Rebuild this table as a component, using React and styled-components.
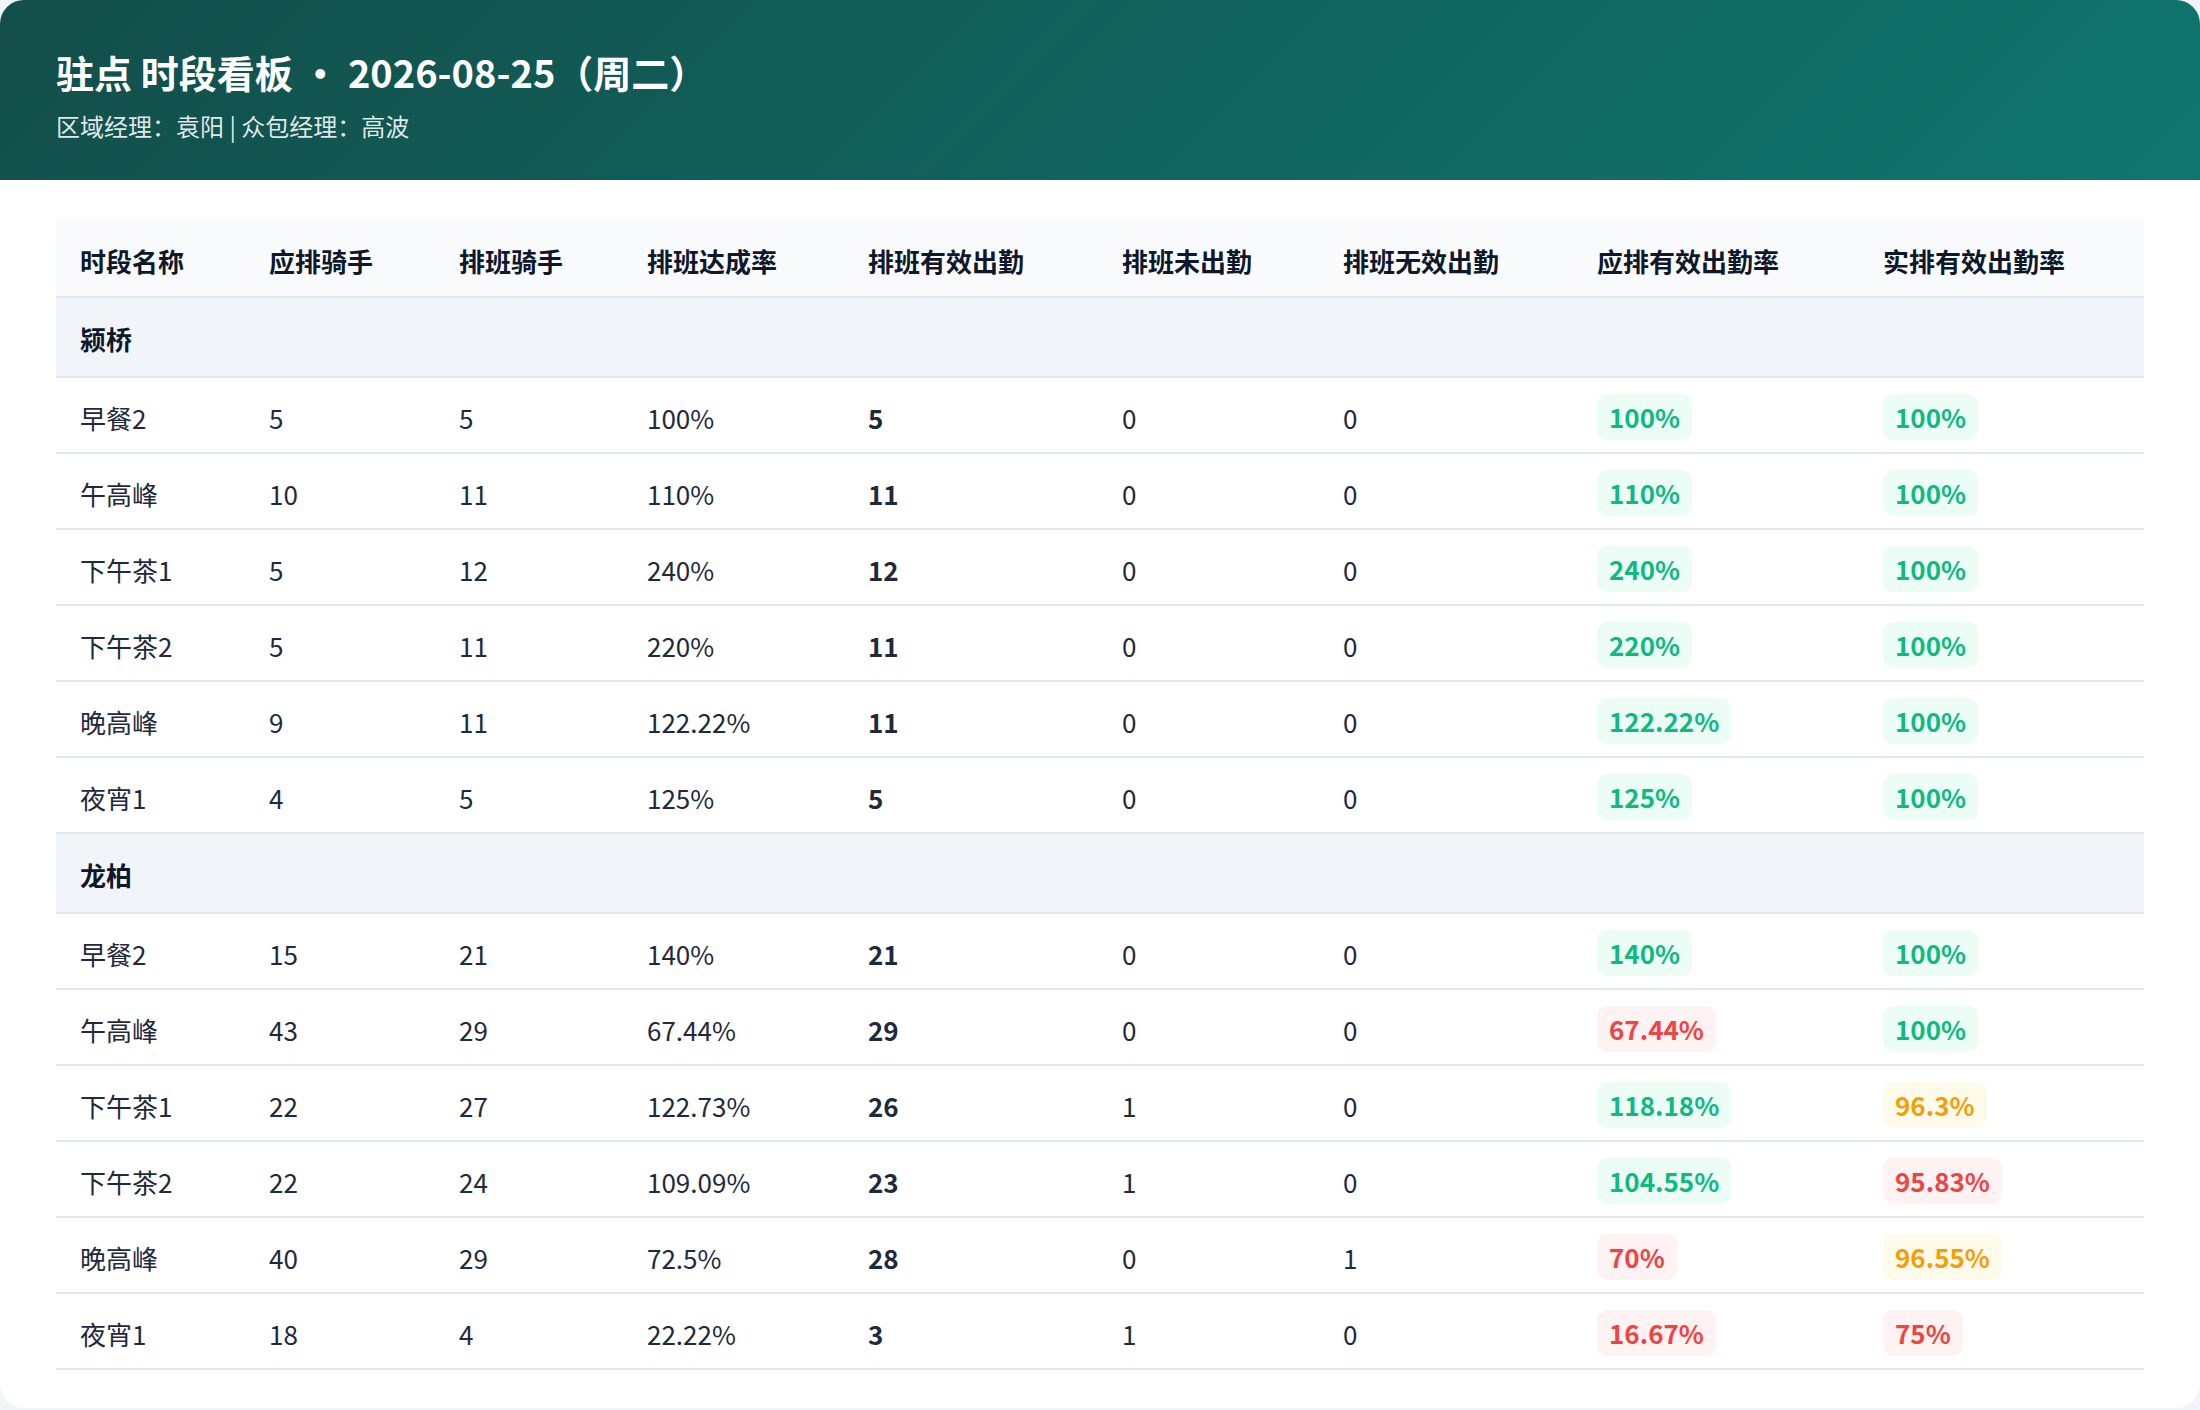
import React from 'react';
import styled, { createGlobalStyle } from 'styled-components';

const GlobalStyle = createGlobalStyle`
  html, body {
    margin: 0;
    padding: 0;
    background: #f1f5f9;
  }
  body {
    font-family: "Noto Sans CJK SC", "Noto Sans", sans-serif;
    color: #1e293b;
  }
`;

const COLUMNS = [
  { title: '时段名称', width: 189 },
  { title: '应排骑手', width: 190 },
  { title: '排班骑手', width: 188 },
  { title: '排班达成率', width: 221 },
  { title: '排班有效出勤', width: 254 },
  { title: '排班未出勤', width: 221 },
  { title: '排班无效出勤', width: 254 },
  { title: '应排有效出勤率', width: 286 },
  { title: '实排有效出勤率', width: 285 }
];

const groups = [
  {
    name: '颍桥',
    rows: [
      ['早餐2', 5, 5, '100%', 5, 0, 0, '100%', '100%'],
      ['午高峰', 10, 11, '110%', 11, 0, 0, '110%', '100%'],
      ['下午茶1', 5, 12, '240%', 12, 0, 0, '240%', '100%'],
      ['下午茶2', 5, 11, '220%', 11, 0, 0, '220%', '100%'],
      ['晚高峰', 9, 11, '122.22%', 11, 0, 0, '122.22%', '100%'],
      ['夜宵1', 4, 5, '125%', 5, 0, 0, '125%', '100%']
    ]
  },
  {
    name: '龙柏',
    rows: [
      ['早餐2', 15, 21, '140%', 21, 0, 0, '140%', '100%'],
      ['午高峰', 43, 29, '67.44%', 29, 0, 0, '67.44%', '100%'],
      ['下午茶1', 22, 27, '122.73%', 26, 1, 0, '118.18%', '96.3%'],
      ['下午茶2', 22, 24, '109.09%', 23, 1, 0, '104.55%', '95.83%'],
      ['晚高峰', 40, 29, '72.5%', 28, 0, 1, '70%', '96.55%'],
      ['夜宵1', 18, 4, '22.22%', 3, 1, 0, '16.67%', '75%']
    ]
  }
];

// >=100 is on target, 96+ is close, anything lower is a miss
const toneOf = value => {
  const n = parseFloat(value);
  if (n >= 100) return 'good';
  if (n >= 96) return 'warn';
  return 'bad';
};

const TONES = {
  good: { fg: '#10b981', bg: '#ecfdf5' },
  warn: { fg: '#f59e0b', bg: '#fffbeb' },
  bad: { fg: '#ef4444', bg: '#fef2f2' }
};

export default function App() {
  return (
    <>
      <GlobalStyle />
      <Card>
        <Banner>
          <Title>驻点 时段看板 • 2026-08-25（周二）</Title>
          <Subtitle>区域经理：袁阳 | 众包经理：高波</Subtitle>
        </Banner>
        <Body>
          <Table>
            <colgroup>
              {COLUMNS.map(col => (
                <col key={col.title} style={{ width: col.width }} />
              ))}
            </colgroup>
            <thead>
              <tr>
                {COLUMNS.map(col => (
                  <HeadCell key={col.title}>{col.title}</HeadCell>
                ))}
              </tr>
            </thead>
            <tbody>
              {groups.map(group => (
                <React.Fragment key={group.name}>
                  <tr>
                    <GroupCell colSpan={COLUMNS.length}>{group.name}</GroupCell>
                  </tr>
                  {group.rows.map((row, index) => (
                    <tr key={index}>
                      {row.map((value, ci) => (
                        <Cell key={ci} strong={ci === 4}>
                          {ci >= 7 ? (
                            <Pill tone={toneOf(value)}>{value}</Pill>
                          ) : (
                            value
                          )}
                        </Cell>
                      ))}
                    </tr>
                  ))}
                </React.Fragment>
              ))}
            </tbody>
          </Table>
        </Body>
      </Card>
    </>
  );
}

const Card = styled.div`
  width: 2200px;
  background: #ffffff;
  border-radius: 24px;
  overflow: hidden;
`;

const Banner = styled.header`
  padding: 46px 56px 36px;
  background: linear-gradient(135deg, #134e4a 0%, #0f766e 100%);
  color: #ffffff;
`;

const Title = styled.h1`
  margin: 0;
  font-size: 38px;
  line-height: 52px;
  font-weight: 700;
`;

const Subtitle = styled.div`
  margin-top: 10px;
  font-size: 24px;
  line-height: 36px;
  color: rgba(255, 255, 255, 0.88);
`;

const Body = styled.div`
  padding: 40px 56px 38px;
`;

const Table = styled.table`
  width: 100%;
  table-layout: fixed;
  border-collapse: collapse;
  font-size: 26px;
  line-height: 39px;
`;

const HeadCell = styled.th`
  padding: 21px 24px 16px;
  text-align: left;
  font-weight: 700;
  color: #0f172a;
  background: #f8fafc;
  border-bottom: 2px solid #e2e8f0;
  white-space: nowrap;
`;

const GroupCell = styled.td`
  padding: 21px 24px 18px;
  font-weight: 700;
  color: #0f172a;
  background: #f1f5f9;
  border-bottom: 2px solid #e2e8f0;
`;

const Cell = styled.td`
  padding: 16px 24px 12px;
  height: 46px;
  vertical-align: middle;
  font-weight: ${props => (props.strong ? 700 : 400)};
  color: #1e293b;
  border-bottom: 2px solid #e2e8f0;
  white-space: nowrap;
`;

const Pill = styled.span`
  display: inline-block;
  padding: 4px 12px;
  line-height: 38px;
  border-radius: 10px;
  font-weight: 700;
  color: ${props => TONES[props.tone].fg};
  background: ${props => TONES[props.tone].bg};
`;
